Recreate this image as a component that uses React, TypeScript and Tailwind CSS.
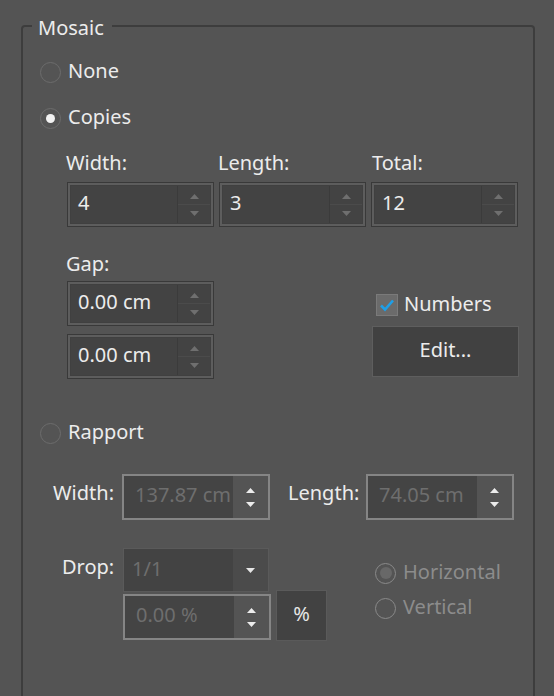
import React from "react";

function Up({ color }: { color: string }) {
  return (
    <svg width="9" height="5" viewBox="0 0 9 5">
      <path d="M4.5 0 L9 5 L0 5 Z" fill={color} />
    </svg>
  );
}
function Down({ color }: { color: string }) {
  return (
    <svg width="9" height="5" viewBox="0 0 9 5">
      <path d="M0 0 L9 0 L4.5 5 Z" fill={color} />
    </svg>
  );
}

function Radio({
  checked,
  disabled,
  label,
}: {
  checked?: boolean;
  disabled?: boolean;
  label: string;
}) {
  return (
    <div className="flex h-[24px] items-center">
      <div
        className={
          disabled
            ? "flex h-[21px] w-[21px] items-center justify-center rounded-full border-[1.5px] border-[#8a8a8a]"
            : "flex h-[21px] w-[21px] items-center justify-center rounded-full border-[1.5px] border-[#6c6c6c]"
        }
      >
        {checked && !disabled && (
          <div className="h-[9px] w-[9px] rounded-full bg-[#f2f2f2]" />
        )}
        {checked && disabled && (
          <div className="h-[12px] w-[12px] rounded-full bg-[#686868]" />
        )}
      </div>
      <span
        className={
          disabled
            ? "ml-[7px] -mt-[3px] text-[#8c8c8c]"
            : "ml-[7px] -mt-[3px] text-[#ececec]"
        }
      >
        {label}
      </span>
    </div>
  );
}

function SpinInput({ value, w = "w-[147px]" }: { value: string; w?: string }) {
  return (
    <div
      className={`flex h-[45px] ${w} border border-[#393939] bg-[#5d5d5d] p-[2px]`}
    >
      <div className="flex flex-1 border border-[#404040] bg-[#434343]">
        <div className="flex flex-1 items-center pb-[4px] pl-[7px] text-[#ececec]">
          {value}
        </div>
        <div className="flex w-[33px] flex-col border-l border-[#3b3b3b]">
          <div className="flex flex-1 items-center justify-center border-b border-[#4b4b4b] pt-[2px]">
            <Up color="#6f6f6f" />
          </div>
          <div className="flex flex-1 items-center justify-center pb-[2px]">
            <Down color="#6f6f6f" />
          </div>
        </div>
      </div>
    </div>
  );
}

function DisabledSpin({ value, h = "h-[46px]" }: { value: string; h?: string }) {
  return (
    <div className={`flex ${h} w-[148px] border-2 border-[#858585] bg-[#545454]`}>
      <div className="flex flex-1 items-center overflow-hidden whitespace-nowrap bg-[#444444] pb-[4px] pl-[11px] text-[#6e6e6e]">
        {value}
      </div>
      <div className="flex w-[35px] flex-col">
        <div className="flex flex-1 items-end justify-center pb-[4px]">
          <Up color="#ececec" />
        </div>
        <div className="flex flex-1 items-start justify-center pt-[5px]">
          <Down color="#ececec" />
        </div>
      </div>
    </div>
  );
}

export default function App() {
  return (
    <div className="h-[696px] w-[554px] overflow-hidden bg-[#545454] pl-[21px] pt-[25px] font-['Noto_Sans',sans-serif] text-[20px] leading-[24px] text-[#ececec]">
      <div className="relative h-[720px] w-[514px] rounded-[4px] border-2 border-[#3d3d3d]">
        <div className="absolute left-[9px] top-[-11px] bg-[#545454] pl-[6px] pr-[8px]">
          Mosaic
        </div>
        <div className="flex flex-col">
          {/* None */}
          <div className="mt-[33px] pl-[17px]">
            <Radio label="None" />
          </div>
          {/* Copies */}
          <div className="mt-[22px] pl-[17px]">
            <Radio label="Copies" checked />
          </div>
          {/* labels */}
          <div className="mt-[21px] flex gap-[5px] pl-[43px]">
            <div className="w-[147px]">Width:</div>
            <div className="w-[147px]">Length:</div>
            <div className="w-[147px] pl-[2px]">Total:</div>
          </div>
          <div className="mt-[7px] flex gap-[5px] pl-[44px]">
            <SpinInput value="4" />
            <SpinInput value="3" />
            <SpinInput value="12" />
          </div>
          {/* Gap */}
          <div className="mt-[25px] pl-[43px]">Gap:</div>
          <div className="mt-[5px] flex gap-[158px] pl-[44px]">
            <div className="flex w-[147px] flex-col gap-[8px]">
              <SpinInput value="0.00 cm" />
              <SpinInput value="0.00 cm" />
            </div>
            <div className="flex w-[147px] flex-col">
              <div className="mt-[12px] flex h-[23px] items-center pl-[4px]">
                <div className="flex h-[22px] w-[22px] items-center justify-center border border-[#7a7a7a] bg-[#6b6b6b]">
                  <svg width="16" height="14" viewBox="0 0 16 14">
                    <path
                      d="M2 7.5 L6 11.5 L14 2.5"
                      fill="none"
                      stroke="#1e9fe8"
                      strokeWidth="2.6"
                    />
                  </svg>
                </div>
                <span className="ml-[6px] -mt-[2px]">Numbers</span>
              </div>
              <div className="mt-[10px] flex h-[51px] w-[147px] items-center justify-center border-[1.5px] border-[#5e5e5e] bg-[#414141] pb-[3px]">
                Edit...
              </div>
            </div>
          </div>
          {/* Rapport */}
          <div className="mt-[42px] pl-[17px]">
            <Radio label="Rapport" />
          </div>
          <div className="mt-[29px] flex items-start pl-[30px]">
            <div className="mt-[7px] w-[63px]">Width:</div>
            <div className="ml-[6px]">
              <DisabledSpin value="137.87 cm" />
            </div>
            <div className="ml-[18px] mt-[7px] w-[72px]">Length:</div>
            <div className="ml-[6px]">
              <DisabledSpin value="74.05 cm" />
            </div>
          </div>
          {/* Drop */}
          <div className="mt-[28px] flex items-start pl-[39px]">
            <div className="mt-[7px] w-[61px]">Drop:</div>
            <div className="flex w-[146px] flex-col">
              <div className="flex h-[44px] border-[1.5px] border-[#5a5a5a] bg-[#434343]">
                <div className="flex flex-1 items-center pb-[3px] pl-[8px] text-[#6e6e6e]">
                  1/1
                </div>
                <div className="flex w-[35px] items-center justify-center bg-[#4b4b4b]">
                  <Down color="#e6e6e6" />
                </div>
              </div>
              <div className="mt-[2px]">
                <DisabledSpin value="0.00 %" />
              </div>
            </div>
            <div className="ml-[7px] mt-[42px] flex h-[51px] w-[51px] items-center justify-center border-[1.5px] border-[#5a5a5a] bg-[#424242] pb-[3px] text-[#e6e6e6]">
              %
            </div>
            <div className="ml-[48px] mt-[13px] flex flex-col gap-[11px]">
              <Radio label="Horizontal" disabled checked />
              <Radio label="Vertical" disabled />
            </div>
          </div>
        </div>
      </div>
    </div>
  );
}
